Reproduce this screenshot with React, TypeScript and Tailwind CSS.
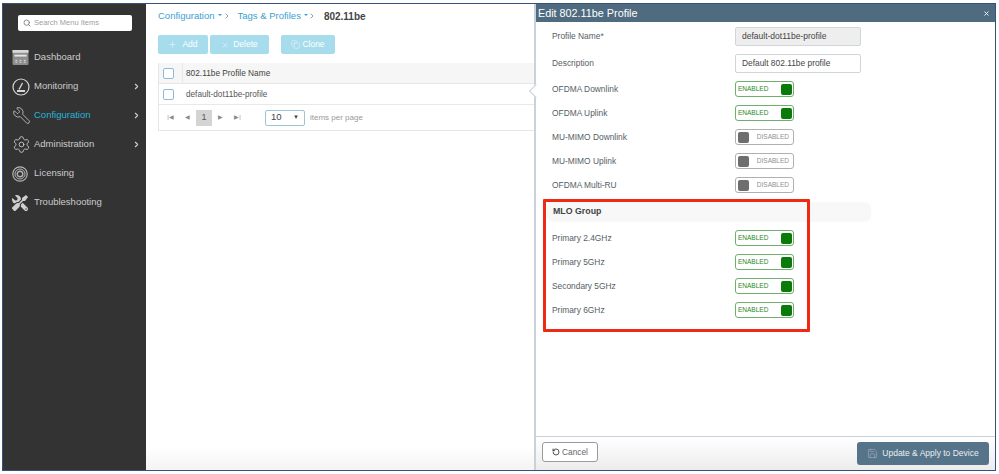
import { ChevronRight, Copy, Plus, RotateCcw, Save, Search, Settings, Wrench, X } from "lucide-react";
import { FaTools } from "react-icons/fa";

const font = { fontFamily: '"Liberation Sans", Arial, sans-serif' };

function DashboardIcon() {
  return (
    <svg viewBox="0 0 17 16" className="w-[17px] h-[15px]">
      <rect x="0" y="0" width="17" height="16" rx="1" fill="#8d8d8d" />
      <rect x="0" y="0" width="17" height="3" fill="#d8d8d8" />
      <rect x="2" y="5" width="13" height="2" fill="#e4e4e4" />
      <path d="M3 11h2M7.5 11h2M12 11h2M3 13h2M7.5 13h2M12 13h2" stroke="#e4e4e4" strokeWidth="1" />
    </svg>
  );
}

function GaugeIcon() {
  return (
    <svg viewBox="0 0 18 18" className="w-[18px] h-[18px]" fill="none" stroke="#d6d6d6">
      <circle cx="9" cy="9" r="8" strokeWidth="1.2" />
      <path d="M7 11.5 10.5 5" strokeWidth="1.4" />
      <rect x="5" y="12" width="8" height="2" fill="#d6d6d6" stroke="none" />
    </svg>
  );
}

function LicensingIcon() {
  return (
    <svg viewBox="0 0 16 16" className="w-[16px] h-[16px]" fill="none" stroke="#b5b5b5">
      <circle cx="8" cy="8" r="7.2" strokeWidth="1.2" />
      <circle cx="8" cy="8" r="5" strokeWidth="1" />
      <circle cx="8" cy="8" r="2.8" strokeWidth="1.4" />
    </svg>
  );
}

const navItems = [
  { label: "Dashboard", icon: <DashboardIcon />, arrow: false },
  { label: "Monitoring", icon: <GaugeIcon />, arrow: true },
  { label: "Configuration", icon: <Wrench className="w-[19px] h-[19px] text-[#d0d0d0] -scale-x-100" strokeWidth={1} />, arrow: true, active: true },
  { label: "Administration", icon: <Settings className="w-[19px] h-[19px] text-[#d0d0d0]" strokeWidth={1.1} />, arrow: true },
  { label: "Licensing", icon: <LicensingIcon />, arrow: false },
  { label: "Troubleshooting", icon: <FaTools className="w-[16px] h-[16px] text-[#cfcfcf] -scale-x-100" />, arrow: false },
];

function Sidebar() {
  return (
    <div className="w-[143px] shrink-0 bg-[#333333] pt-[11px]">
      <div className="ml-[15px] w-[114px] h-[16px] bg-white rounded-[2px] flex items-center pl-[5px] gap-[3px]">
        <Search className="w-[8px] h-[8px] text-[#777]" strokeWidth={2.5} />
        <span className="text-[7.5px] text-[#a0a0a0]">Search Menu Items</span>
      </div>
      <div className="mt-[12px]">
        {navItems.map((item) => (
          <div key={item.label} className="h-[29px] flex items-center">
            <div className="w-[31px] pl-[9px] shrink-0 flex justify-start">{item.icon}</div>
            <span className={`text-[9.5px] flex-1 ${item.active ? "text-[#26b3d6]" : "text-[#cccccc]"}`}>{item.label}</span>
            {item.arrow && <ChevronRight className="w-[9px] h-[9px] text-[#d2d2d2] mr-[5px]" strokeWidth={3} />}
          </div>
        ))}
      </div>
    </div>
  );
}

function Caret() {
  return <span className="inline-block ml-[3px] mb-[3px] border-x-[2px] border-t-[2px] border-x-transparent border-t-[#3b9fd0]" />;
}

function Toolbar() {
  return (
    <div className="flex mt-[8px] text-[8.5px] text-white h-[19px]">
      <div className="w-[50px] bg-[#a6dcec] rounded-[2px] flex items-center justify-center gap-[5px]">
        <Plus className="w-[9px] h-[9px]" strokeWidth={1.2} />
        Add
      </div>
      <div className="w-[59px] ml-[2px] bg-[#a6dcec] rounded-[2px] flex items-center justify-center gap-[4px]">
        <X className="w-[8px] h-[8px]" strokeWidth={1.2} />
        Delete
      </div>
      <div className="w-[54px] ml-[12px] bg-[#a6dcec] rounded-[2px] flex items-center justify-center gap-[2px]">
        <Copy className="w-[9px] h-[9px]" strokeWidth={1.2} />
        Clone
      </div>
    </div>
  );
}

function Checkbox() {
  return <span className="block w-[11px] h-[11px] rounded-[2px] border border-[#8fb8e0] bg-white" />;
}

function PagerGlyph({ children }: { children: string }) {
  return <span className="w-[17px] text-center text-[6px] text-[#8a8a8a]">{children}</span>;
}

function MainPanel() {
  return (
    <div className="flex-1 min-w-0 pl-[12px] bg-gradient-to-b from-white from-95% to-[#f4f4f4]">
      <div className="flex items-center h-[23px] pt-[1px] text-[9.5px] text-[#3b9fd0]">
        <span>Configuration</span>
        <Caret />
        <ChevronRight className="w-[8px] h-[8px] text-[#666] ml-[1px] mr-[7px]" strokeWidth={2} />
        <span>Tags &amp; Profiles</span>
        <Caret />
        <ChevronRight className="w-[8px] h-[8px] text-[#666] mr-[8px]" strokeWidth={2} />
        <span className="font-bold text-[#444] text-[10px]">802.11be</span>
      </div>
      <Toolbar />
      <div className="mt-[9px] border-l border-b border-[#e6e6e6]">
        <div className="h-[21px] flex items-center bg-[#f6f6f6] border-b border-[#e8e8e8]">
          <div className="w-[24px] pl-[4px] border-r border-[#e8e8e8] h-full flex items-center"><Checkbox /></div>
          <span className="pl-[3px] text-[8.3px] text-[#444]">802.11be Profile Name</span>
        </div>
        <div className="h-[21px] flex items-center border-b border-[#e8e8e8]">
          <div className="w-[24px] pl-[4px]"><Checkbox /></div>
          <span className="pl-[3px] pt-[2px] text-[8.2px] text-[#555]">default-dot11be-profile</span>
        </div>
        <div className="h-[25px] flex items-center pl-[3px]">
          <PagerGlyph>|◀</PagerGlyph>
          <PagerGlyph>◀</PagerGlyph>
          <span className="w-[16px] h-[16px] bg-[#d4d4d4] text-[9px] text-[#555] flex items-center justify-center">1</span>
          <PagerGlyph>▶</PagerGlyph>
          <PagerGlyph>▶|</PagerGlyph>
          <div className="ml-[19px] w-[40px] h-[16px] border border-[#9fc3d8] rounded-[2px] flex items-center justify-between px-[5px] text-[9.5px] text-[#444]">
            10
            <span className="text-[6px]">▼</span>
          </div>
          <span className="ml-[5px] text-[8px] text-[#999]">items per page</span>
        </div>
      </div>
    </div>
  );
}

function Toggle({ on }: { on: boolean }) {
  return on ? (
    <div className="w-[59px] h-[16px] border-[1.5px] border-[#6fae6f] rounded-[3px] flex items-center justify-between pl-[2px] pr-[1.5px] bg-white">
      <span className="text-[6.5px] text-[#1f8a1f]">ENABLED</span>
      <span className="w-[11px] h-[11px] rounded-[2px] bg-[#0a7a0a]" />
    </div>
  ) : (
    <div className="w-[59px] h-[16px] border-[1.5px] border-[#b0b0b0] rounded-[3px] flex items-center justify-between pl-[1.5px] pr-[4px] bg-white">
      <span className="w-[11px] h-[11px] rounded-[2px] bg-[#6e6e6e]" />
      <span className="text-[6.5px] text-[#8f8f8f]">DISABLED</span>
    </div>
  );
}

function FormRow({ label, children }: { label: string; children: React.ReactNode }) {
  return (
    <div className="flex items-center">
      <span className="w-[183px] shrink-0 text-[8.4px] text-[#556066]">{label}</span>
      {children}
    </div>
  );
}

function EditDrawer() {
  return (
    <div className="relative w-[461px] shrink-0 flex flex-col border-l-2 border-[#c9d2da] bg-white">
      <span className="absolute left-[-5px] top-[82px] w-[10px] h-[10px] rotate-45 bg-white border-l border-b border-[#c9d2da]" />
      <div className="h-[18px] shrink-0 bg-[#4f6b80] text-white flex items-center justify-between pl-[2px] pr-[5px] text-[10.8px]">
        Edit 802.11be Profile
        <X className="w-[7px] h-[7px]" strokeWidth={3} />
      </div>
      <div className="relative flex-1 flex flex-col gap-[8px] pt-[5px] pl-[16px]">
        <FormRow label="Profile Name*">
          <div className="w-[126px] h-[19px] bg-[#eeeeee] border border-[#cfd6da] rounded-[2px] flex items-center pl-[6px] text-[8.5px] text-[#444]">default-dot11be-profile</div>
        </FormRow>
        <FormRow label="Description">
          <div className="w-[126px] h-[19px] bg-white border border-[#cfd6da] rounded-[2px] flex items-center pl-[6px] text-[8.4px] text-[#444]">Default 802.11be profile</div>
        </FormRow>
        <FormRow label="OFDMA Downlink"><Toggle on /></FormRow>
        <FormRow label="OFDMA Uplink"><Toggle on /></FormRow>
        <FormRow label="MU-MIMO Downlink"><Toggle on={false} /></FormRow>
        <FormRow label="MU-MIMO Uplink"><Toggle on={false} /></FormRow>
        <FormRow label="OFDMA Multi-RU"><Toggle on={false} /></FormRow>
        <div className="-ml-[5px] mt-[1px] w-[324px] h-[20px] bg-[#f8f8f8] rounded-[6px] flex items-center pl-[6px] text-[8.8px] font-bold text-[#444]">MLO Group</div>
        <FormRow label="Primary 2.4GHz"><Toggle on /></FormRow>
        <FormRow label="Primary 5GHz"><Toggle on /></FormRow>
        <FormRow label="Secondary 5GHz"><Toggle on /></FormRow>
        <FormRow label="Primary 6GHz"><Toggle on /></FormRow>
        <div className="absolute left-[7px] top-[177px] w-[267px] h-[133px] border-[3px] border-[#ee2a12] rounded-[1px]" />
      </div>
      <div className="h-[34px] shrink-0 border-t border-[#c9d2da] bg-gradient-to-b from-white to-[#ececec] flex justify-between pl-[6px] pr-[6px] pt-[5px]">
        <div className="w-[56px] h-[20px] border border-[#9a9a9a] rounded-[3px] bg-white flex items-center justify-center gap-[2px] text-[8.3px] text-[#666]">
          <RotateCcw className="w-[8px] h-[8px] text-[#333]" strokeWidth={2.5} />
          Cancel
        </div>
        <div className="w-[132px] h-[23px] bg-[#557389] rounded-[3px] flex items-center justify-center gap-[4px] text-[8.5px] text-[#e8eef2]">
          <Save className="w-[11px] h-[11px] text-[#aebdc8]" strokeWidth={1.2} />
          Update &amp; Apply to Device
        </div>
      </div>
    </div>
  );
}

export default function App() {
  return (
    <div className="w-[999px] h-[474px] bg-white pt-[3px] pl-[2px] pr-[3px] pb-[3px] overflow-hidden" style={font}>
      <div className="w-full h-full flex border border-[#34517f]">
        <Sidebar />
        <MainPanel />
        <EditDrawer />
      </div>
    </div>
  );
}
